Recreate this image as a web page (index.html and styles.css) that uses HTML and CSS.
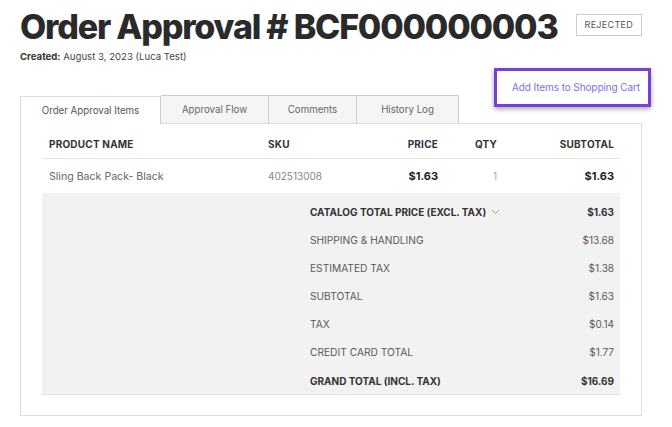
FILE: index.html
```html
<!DOCTYPE html>
<html>
<head>
<meta charset="utf-8">
<link rel="stylesheet" href="styles.css">
</head>
<body>
<div class="page">
  <div class="head">
    <h1 class="title">Order Approval # BCF000000003</h1>
    <span class="badge">REJECTED</span>
  </div>
  <div class="created"><b>Created:</b> August 3, 2023 (Luca Test)</div>
  <div class="actions">
    <a class="cart-link">Add Items to Shopping Cart</a>
  </div>
  <div class="tabs">
    <div class="tab active">Order Approval Items</div>
    <div class="tab t2">Approval Flow</div>
    <div class="tab t3">Comments</div>
    <div class="tab t4">History Log</div>
  </div>
  <div class="panel">
    <div class="grid hdr">
      <div class="c-name">PRODUCT NAME</div>
      <div class="c-sku">SKU</div>
      <div class="c-price">PRICE</div>
      <div class="c-qty">QTY</div>
      <div class="c-sub">SUBTOTAL</div>
    </div>
    <div class="grid row">
      <div class="c-name pname">Sling Back Pack- Black</div>
      <div class="c-sku sku">402513008</div>
      <div class="c-price money">$1.63</div>
      <div class="c-qty qty">1</div>
      <div class="c-sub money">$1.63</div>
    </div>
    <div class="summary">
      <div class="srow strong"><span class="lbl">CATALOG TOTAL PRICE (EXCL. TAX) <svg class="chev" width="9" height="6" viewBox="0 0 9 6"><path d="M1 1l3.5 3.5L8 1" fill="none" stroke="#999" stroke-width="1"/></svg></span><span class="val">$1.63</span></div>
      <div class="srow"><span class="lbl">SHIPPING &amp; HANDLING</span><span class="val">$13.68</span></div>
      <div class="srow"><span class="lbl">ESTIMATED TAX</span><span class="val">$1.38</span></div>
      <div class="srow"><span class="lbl">SUBTOTAL</span><span class="val">$1.63</span></div>
      <div class="srow"><span class="lbl">TAX</span><span class="val">$0.14</span></div>
      <div class="srow"><span class="lbl">CREDIT CARD TOTAL</span><span class="val">$1.77</span></div>
      <div class="srow strong"><span class="lbl">GRAND TOTAL (INCL. TAX)</span><span class="val">$16.69</span></div>
    </div>
  </div>
</div>
</body>
</html>
```
FILE: styles.css
```css
* { box-sizing: border-box; }
html, body { margin: 0; padding: 0; background: #fff; }
body { font-family: Inter, "Noto Sans", sans-serif; color: #333; }
.page { width: 672px; padding: 9px 30px 0 20px; }
.head { display: flex; align-items: flex-start; justify-content: space-between; }
.title { margin: 0; font-size: 34px; font-weight: 800; color: #2a2a2a; line-height: 36px; letter-spacing: -1.2px; white-space: nowrap; }
.badge { margin-top: 5px; border: 1px solid #ccc; padding: 0 8px; height: 22px; line-height: 20px; font-size: 9px; color: #555; letter-spacing: 0.3px; }
.created { margin-top: 6px; font-size: 9.6px; color: #444; line-height: 12px; }
.created b { font-weight: 700; color: #333; }
.actions { display: flex; justify-content: flex-end; height: 32px; position: relative; z-index: 1; }
.cart-link { display: block; width: 157px; height: 39px; margin-top: 5px; margin-right: -9px; border: 3px solid #7a3fd4; box-shadow: 0 2px 5px rgba(0,0,0,0.35); padding: 10px 0 0 15px; font-size: 10px; color: #7d6ff0; background: #fff; white-space: nowrap; letter-spacing: -0.1px; }
.tabs { display: flex; height: 28px; position: relative; }
.tab { border: 1px solid #ccc; border-bottom: 0; background: #f5f5f5; font-size: 9.7px; color: #666; display: flex; align-items: center; justify-content: center; }
.tab + .tab { border-left: 0; }
.tab.active { width: 141px; background: #fff; color: #555; position: relative; top: 1px; height: 28px; z-index: 2; border-color: #ddd; border-right: 1px solid #ccc; }
.t2 { width: 108px; }
.t3 { width: 88px; }
.t4 { width: 102px; }
.panel { border: 1px solid #ddd; padding: 0 21px 21px 21px; height: 293px; }
.grid { display: grid; grid-template-columns: 219px 120px 50px 59px 1fr; align-items: center; padding: 0 6px 0 7px; }
.hdr { height: 35px; padding-top: 5px; border-bottom: 1px solid #e4e4e4; font-size: 10px; font-weight: 700; color: #333; letter-spacing: 0.2px; }
.row { height: 34px; }
.c-price, .c-sub { text-align: right; }
.c-qty { text-align: right; }
.pname { font-size: 10.6px; color: #666; }
.sku { font-size: 10px; color: #888; }
.money { font-size: 11px; font-weight: 700; color: #222; }
.qty { font-size: 10px; color: #aaa69e; }
.summary { background: #f2f2f2; border-bottom: 1px solid #e3e3e3; padding: 5px 6px 0 268px; height: 202px; }
.srow { display: flex; justify-content: space-between; align-items: center; height: 28px; font-size: 10.2px; color: #595959; }
.srow:last-child { height: 30px; }
.srow.strong { font-weight: 700; color: #333; font-size: 10px; }
.lbl { display: flex; align-items: center; gap: 4px; }
.val { font-size: 10px; }
.chev { margin-left: 1px; }
```
